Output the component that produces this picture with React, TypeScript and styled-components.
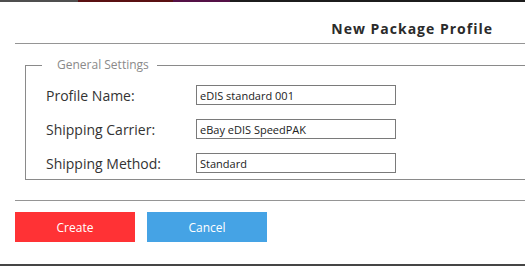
import React from "react";
import styled, { createGlobalStyle } from "styled-components";

const Global = createGlobalStyle`
  html, body { margin: 0; padding: 0; background: #fff; overflow: hidden; }
  body { font-family: "Open Sans", "DejaVu Sans", sans-serif; }
  #root { width: 100%; }
`;

const Page = styled.div`
  display: flex;
  flex-direction: column;
  height: 266px;
  box-sizing: border-box;
  border-bottom: 2px solid #454545;
  overflow: hidden;
`;

const Strip = styled.div`
  display: flex;
  height: 2px;
  flex: none;
`;

const StripPart = styled.div<{ $w: string; $c: string }>`
  width: ${(p) => p.$w};
  flex: ${(p) => (p.$w === "auto" ? "1" : "none")};
  background: ${(p) => p.$c};
`;

const Content = styled.div`
  margin-left: 15px;
  display: flex;
  flex-direction: column;
`;

const Header = styled.div`
  padding: 17px 32px 5px 0;
  border-bottom: 1px solid #959595;
  display: flex;
  justify-content: flex-end;
`;

const Title = styled.h1`
  margin: 0;
  font-size: 14px;
  line-height: 19px;
  font-weight: 700;
  letter-spacing: 1px;
  color: #2b2b2b;
`;

const Fieldset = styled.fieldset`
  margin: 13px -20px 0 10px;
  padding: 12px 0 6px 20px;
  border: 1px solid #8a8a8a;
  display: flex;
  flex-direction: column;
  gap: 14px;
`;

const Legend = styled.legend`
  margin-left: -4px;
  padding: 0 8px 0 15px;
  font-size: 12px;
  line-height: 16px;
  color: #8a8a8a;
`;

const Row = styled.div`
  display: flex;
  align-items: center;
  height: 20px;
`;

const Label = styled.label`
  width: 150px;
  font-size: 14px;
  color: #333;
`;

const Input = styled.input`
  box-sizing: border-box;
  width: 200px;
  height: 20px;
  margin: 0;
  padding: 0 3px;
  border: 1px solid #7a7a7a;
  border-radius: 0;
  font-family: "Open Sans", "DejaVu Sans", sans-serif;
  font-size: 11px;
  color: #222;
  background: #fff;
  outline: none;
`;

const Divider = styled.div`
  margin-top: 20px;
  border-top: 1px solid #959595;
`;

const Actions = styled.div`
  display: flex;
  gap: 12px;
  margin-top: 11px;
`;

const Button = styled.button<{ $bg: string }>`
  width: 120px;
  height: 30px;
  border: none;
  border-radius: 0;
  background: ${(p) => p.$bg};
  color: #fff;
  font-family: "Open Sans", "DejaVu Sans", sans-serif;
  font-size: 12px;
  padding: 0;
  cursor: pointer;
`;

const fields = [
  { label: "Profile Name:", value: "eDIS standard 001" },
  { label: "Shipping Carrier:", value: "eBay eDIS SpeedPAK" },
  { label: "Shipping Method:", value: "Standard" },
];

export default function App() {
  return (
    <>
      <Global />
      <Page>
        <Strip>
          <StripPart $w="78px" $c="#4f4f4f" />
          <StripPart $w="95px" $c="#5a1012" />
          <StripPart $w="57px" $c="#541046" />
          <StripPart $w="auto" $c="#1c1c1c" />
        </Strip>
        <Content>
          <Header>
            <Title>New Package Profile</Title>
          </Header>
          <Fieldset>
            <Legend>General Settings</Legend>
            {fields.map((f) => (
              <Row key={f.label}>
                <Label>{f.label}</Label>
                <Input defaultValue={f.value} readOnly />
              </Row>
            ))}
          </Fieldset>
          <Divider />
          <Actions>
            <Button $bg="#ff3235">Create</Button>
            <Button $bg="#45a3e5">Cancel</Button>
          </Actions>
        </Content>
      </Page>
    </>
  );
}
